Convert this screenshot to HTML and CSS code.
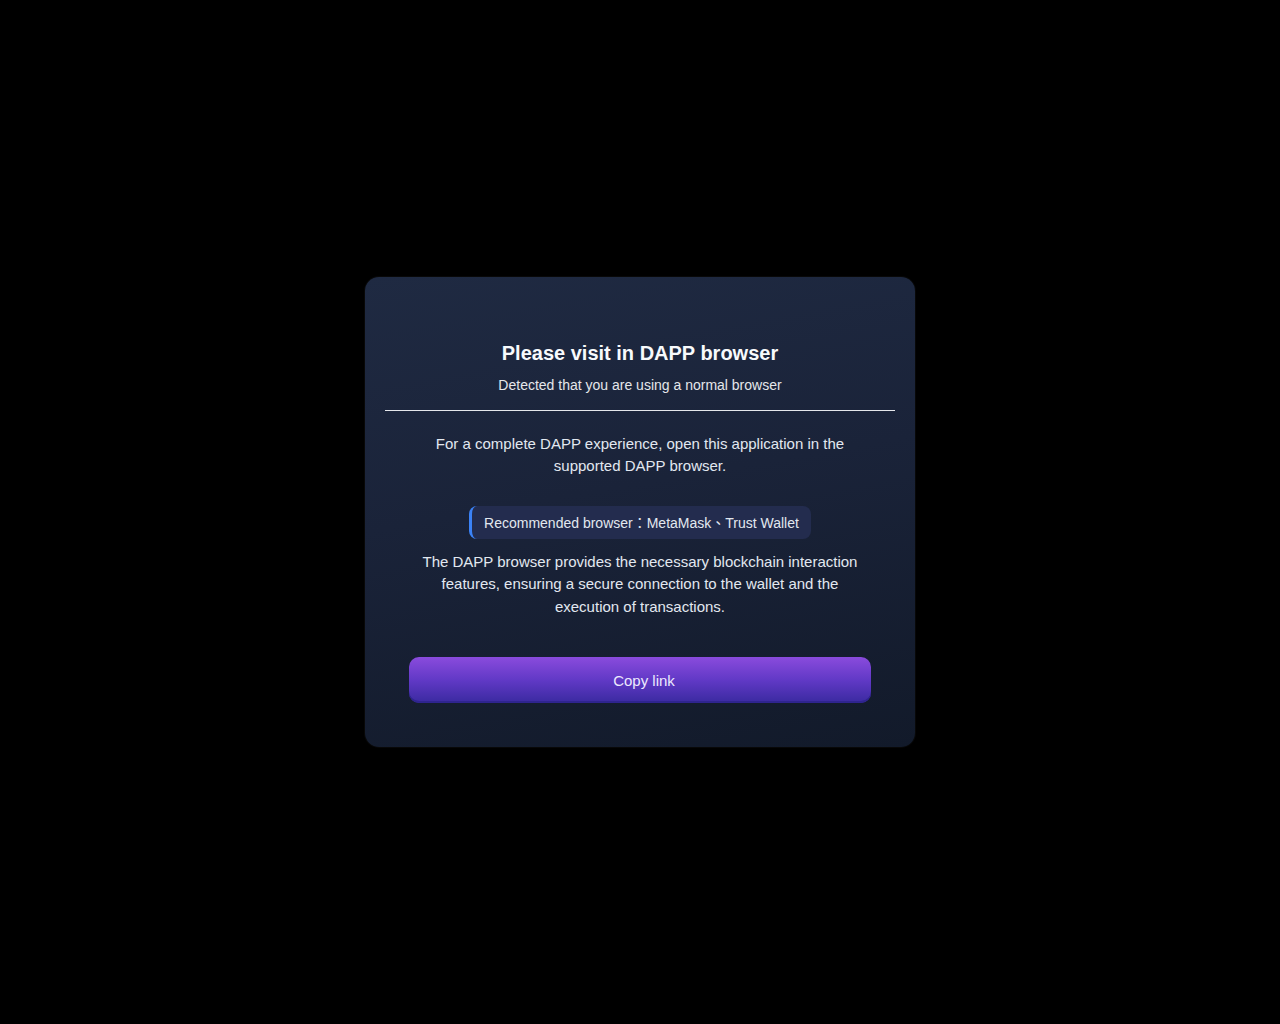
FILE: index.html
```html
<!DOCTYPE html>
<html lang="en">
<head>
    <meta charset="UTF-8">
    <meta name="viewport" content="width=device-width, initial-scale=1.0">
    <title>Please visit in DAPP browser</title>
    <link rel="stylesheet" href="styles.css">
</head>
<body>
    <div class="overlay">
        <div class="card">
            <div class="cardHead">
                <h2 class="title">Please visit in DAPP browser</h2>
                <p class="subtitle">Detected that you are using a normal browser</p>
            </div>
            <div class="cardBody">
                <p class="text first">For a complete DAPP experience, open this application in the supported DAPP browser.</p>
                <div class="badge">Recommended browser：MetaMask、Trust Wallet</div>
                <p class="text">The DAPP browser provides the necessary blockchain interaction features, ensuring a secure connection to the wallet and the execution of transactions.</p>
                <button type="button" class="copyBtn">Copy link</button>
            </div>
        </div>
    </div>
</body>
</html>
```

FILE: styles.css
```css
*{
    box-sizing: border-box;
}
body{
    margin: 0;
    background: #000;
    font-family: "Liberation Sans", Arial, sans-serif;
}
.overlay{
    height: 1024px;
    display: flex;
    align-items: center;
    justify-content: center;
}
.card{
    width: 550px;
    padding: 64px 20px 44px;
    border-radius: 14px;
    background: linear-gradient(170deg, #1f2a42 0%, #1a2339 45%, #121a2a 100%);
    box-shadow: 0 0 0 1px rgba(255,255,255,0.03);
    text-align: center;
}
.cardHead{
    padding-bottom: 15px;
    border-bottom: 1px solid #e5e7eb;
}
.title{
    margin: 0;
    font-size: 20px;
    line-height: 24px;
    font-weight: bold;
    color: #f8fafc;
}
.subtitle{
    margin: 10px 0 0;
    font-size: 14px;
    line-height: 20px;
    color: #e5e7eb;
}
.cardBody{
    padding: 22px 24px 0;
    display: flex;
    flex-direction: column;
    align-items: center;
}
.text{
    margin: 0;
    font-size: 15px;
    line-height: 22.5px;
    color: #e2e8f0;
}
.text.first{
    line-height: 22px;
}
.badge{
    margin: 29px 0 12px;
    padding: 8px 12px 6px;
    font-family: "Liberation Sans", "Noto Sans CJK TC", sans-serif;
    font-size: 14px;
    line-height: 19px;
    color: #e2e8f0;
    background: #232c4e;
    border-left: 3px solid #3b82f6;
    border-radius: 8px;
}
.copyBtn{
    margin-top: 39px;
    width: 100%;
    height: 46px;
    padding: 0 0 0 8px;
    border: none;
    border-radius: 10px;
    background: linear-gradient(180deg, #8a4bdd 0%, #6139c6 50%, #3a2aa0 100%);
    box-shadow: inset 0 -2px 0 #2f248f;
    color: #ede9fe;
    font-family: "Liberation Sans", Arial, sans-serif;
    font-size: 15px;
    cursor: pointer;
}
```
